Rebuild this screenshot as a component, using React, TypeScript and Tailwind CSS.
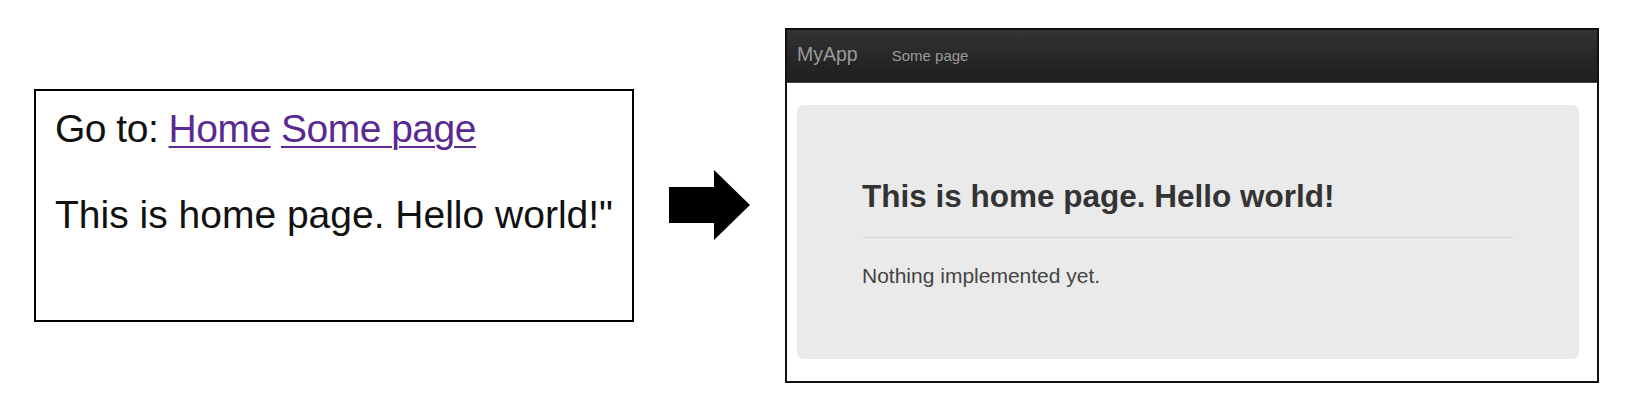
export default function App() {
  return (
    <div className="w-[1627px] h-[402px] bg-white flex items-start font-['Liberation_Sans',Arial,sans-serif]">
      {/* before: plain page */}
      <div className="mt-[89px] ml-[34px] w-[600px] h-[233px] border-2 border-black pl-[19px] pt-[16px] text-[39px] leading-[44px] text-[#111]">
        <p className="tracking-[-0.5px]">
          Go to:{" "}
          <a href="#" className="text-[#5b2a91] underline underline-offset-[4px] decoration-2">
            Home
          </a>{" "}
          <a href="#" className="text-[#5b2a91] underline underline-offset-[4px] decoration-2">
            Some page
          </a>
        </p>
        <p className="mt-[42px]">This is home page. Hello world!"</p>
      </div>

      {/* arrow */}
      <svg className="ml-[35px] mt-[170px]" width="82" height="71" viewBox="0 0 82 71">
        <polygon points="0,17 45,17 45,0 81,35 45,70 45,53 0,53" fill="#000" />
      </svg>

      {/* after: styled page */}
      <div className="ml-[34px] mt-[28px] w-[814px] h-[355px] border-2 border-[#111] flex flex-col">
        <nav className="h-[53px] bg-gradient-to-b from-[#333] to-[#1e1e1e] border-b border-[#444] flex items-baseline pl-[10px] pt-[14px] leading-[20px] text-[#9a9a9a]">
          <span className="text-[19.5px]">MyApp</span>
          <span className="ml-[34px] text-[15px]">Some page</span>
        </nav>
        <div className="mt-[22px] ml-[10px] mr-[18px] h-[254px] bg-[#eaeaea] rounded-[6px] px-[65px] pt-[75px]">
          <h1 className="text-[31.5px] font-bold leading-[33px] text-[#333]">This is home page. Hello world!</h1>
          <hr className="mt-[24px] border-t border-[#d6d6d6]" />
          <p className="mt-[23px] text-[21px] leading-[30px] text-[#444]">Nothing implemented yet.</p>
        </div>
      </div>
    </div>
  );
}
